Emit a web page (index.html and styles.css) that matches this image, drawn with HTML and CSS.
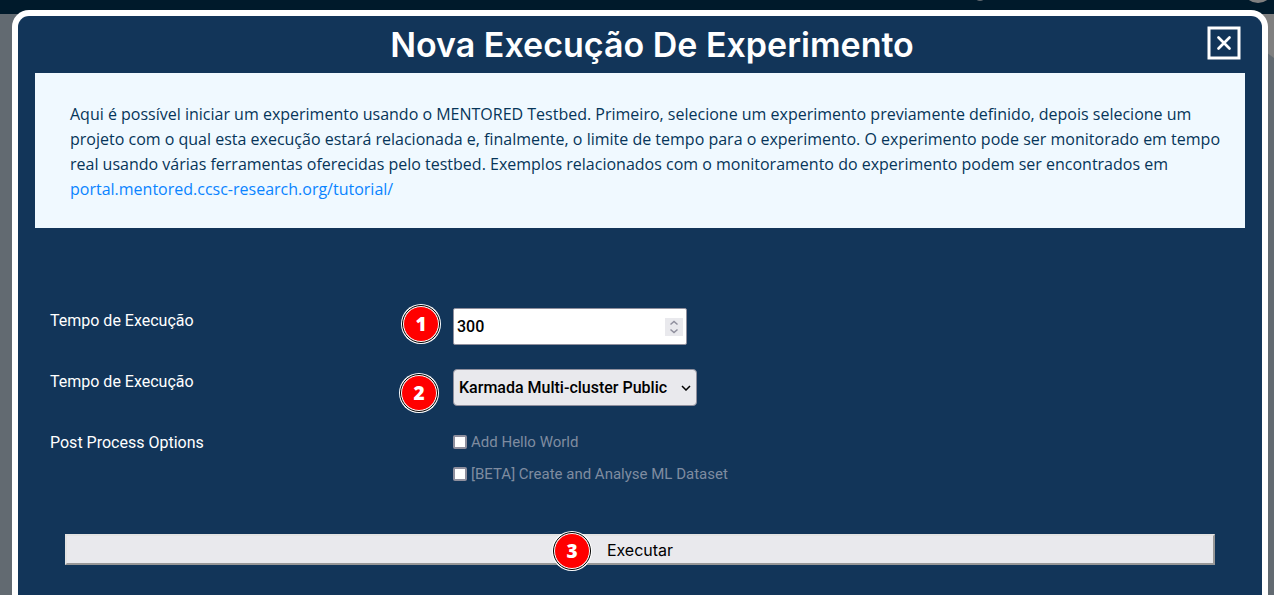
FILE: index.html
```html
<!DOCTYPE html>
<html lang="pt-BR">
<head>
<meta charset="utf-8">
<meta name="viewport" content="width=device-width, initial-scale=1">
<title>Nova Execução De Experimento</title>
<link rel="stylesheet" href="styles.css">
</head>
<body>
<div class="topbar"><span class="dot dot-small"></span><span class="dot dot-large"></span></div>
<div class="glow"></div>
<main class="modal" role="dialog" aria-labelledby="title">
  <header class="modal-header">
    <h1 id="title">Nova Execução De Experimento</h1>
    <button class="close" type="button" aria-label="Fechar">
      <svg viewBox="0 0 34 34" width="34" height="34" aria-hidden="true">
        <rect x="2" y="2" width="30" height="30" fill="none" stroke="#fff" stroke-width="3"/>
        <path d="M11.500 11.500 22.500 22.500M22.500 11.500 11.500 22.500" fill="none" stroke="#fff" stroke-width="2.700" stroke-linecap="round"/>
      </svg>
    </button>
  </header>
  <section class="notice">
    <p>Aqui é possível iniciar um experimento usando o MENTORED Testbed. Primeiro, selecione um experimento previamente definido, depois selecione um projeto com o qual esta execução estará relacionada e, finalmente, o limite de tempo para o experimento. O experimento pode ser monitorado em tempo real usando várias ferramentas oferecidas pelo testbed. Exemplos relacionados com o monitoramento do experimento podem ser encontrados em <a href="#tutorial">portal.mentored.ccsc-research.org/tutorial/</a></p>
  </section>
  <form class="form">
    <div class="row">
      <label class="label" for="time">Tempo de Execução</label>
      <div class="field">
        <span class="badge badge-one">1</span>
        <div class="number">
          <input id="time" type="number" value="300">
          <svg class="spinner" viewBox="0 0 18 18" width="18" height="18" aria-hidden="true">
            <rect width="18" height="18" fill="#e9e9ed"/>
            <path d="M5.500 6.500 9 3.500 12.500 6.500M5.500 11.500 9 14.500 12.500 11.500" fill="none" stroke="#8f8f9d" stroke-width="1.500"/>
          </svg>
        </div>
      </div>
    </div>
    <div class="row">
      <label class="label" for="cluster">Tempo de Execução</label>
      <div class="field">
        <span class="badge badge-two">2</span>
        <div class="picker">
          <select id="cluster"><option>Karmada Multi-cluster Public</option></select>
          <svg class="chevron" viewBox="0 0 10 6" width="10" height="6" aria-hidden="true">
            <path d="M1 1 5 5 9 1" fill="none" stroke="#000" stroke-width="1.500"/>
          </svg>
        </div>
      </div>
    </div>
    <div class="row">
      <span class="label">Post Process Options</span>
      <div class="field options">
        <label class="option"><input type="checkbox">Add Hello World</label>
        <label class="option"><input type="checkbox">[BETA] Create and Analyse ML Dataset</label>
      </div>
    </div>
    <div class="actions">
      <button class="run" type="submit">Executar</button>
      <span class="badge badge-three">3</span>
    </div>
  </form>
</main>
</body>
</html>
```
FILE: styles.css
```css
* { box-sizing: border-box; }

body {
  display: flow-root;
  margin: 0;
  min-height: 100vh;
  background: #626a71;
  color: #fff;
  font: 16px/24px Roboto, "Open Sans", sans-serif;
}

.topbar {
  position: absolute;
  inset: 0 0 auto;
  height: 14px;
  overflow: hidden;
  background: #001a2b;
}

.dot {
  position: absolute;
  border-radius: 50%;
}

.dot-small { top: -11px; right: 288px; width: 12px; height: 12px; background: #626a71; }
.dot-large { top: -26px; right: 1px; width: 30px; height: 29px; background: #808080; }

.glow {
  position: absolute;
  top: 14px;
  right: 0;
  width: 24px;
  height: 44px;
  background: #808080;
  clip-path: polygon(0 0, 100% 0, 100% 100%, 0 60%);
}

.modal {
  position: relative;
  min-height: calc(100vh - 10px);
  margin: 10px 6px 0 12px;
  padding: 0 17px;
  border: 6px solid #fff;
  border-bottom: 0;
  border-radius: 17px 17px 0 0;
  background: #123559;
}

.modal-header {
  display: flex;
  align-items: center;
  height: 57px;
  padding: 0 4px 3px 0;
}

.modal-header h1 {
  flex: 1;
  margin: 0;
  padding: 4px 0 0 62px;
  font: 600 34px/40px Inter, sans-serif;
  text-align: center;
}

.close {
  display: flex;
  padding: 0;
  border: 0;
  background: none;
  cursor: pointer;
}

.notice {
  padding: 29px 16px 26px 35px;
  background: #f0f9ff;
  color: #063559;
  font: 16px/25px "Open Sans", sans-serif;
}

.notice p { margin: 0; }

.notice a {
  display: inline-block;
  color: #0a84ff;
  text-decoration: none;
}

.form { padding: 80px 15px 0; }

.row {
  display: grid;
  grid-template-columns: 403px 1fr;
  align-items: start;
  min-height: 61px;
}

.label { padding-top: 1px; }

.field { position: relative; }

.number, .picker {
  position: relative;
  width: 234px;
}

.number input, .picker select {
  display: block;
  width: 100%;
  height: 37px;
  border: 1px solid #8f8f9d;
  border-radius: 2px;
  color: #000;
  font: 500 16px/24px Roboto, sans-serif;
}

.number input {
  padding: 0 24px 0 3px;
  background: #fff;
  appearance: textfield;
}

.picker { width: 244px; }

.picker select {
  padding: 0 20px 0 5px;
  border-radius: 4px;
  background: #e9e9ed;
  appearance: none;
}

.spinner, .chevron {
  position: absolute;
  top: 10px;
  right: 4px;
  pointer-events: none;
}

.chevron { top: 16px; right: 6px; }

.options {
  display: grid;
  gap: 8px;
}

.option {
  display: flex;
  align-items: center;
  gap: 4px;
  color: #7f8ca0;
  font-size: 15px;
}

.option input {
  width: 14px;
  height: 14px;
  margin: 0;
  border: 2px solid #8f8f9d;
  border-radius: 2px;
  background: #fff;
  appearance: none;
}

.actions {
  position: relative;
  margin-top: 43px;
  padding: 0 15px;
}

.run {
  display: block;
  width: 100%;
  height: 31px;
  padding: 0;
  border: 2px solid;
  border-color: #e3e3e3 #979797 #979797 #e3e3e3;
  background: #e9e9ed;
  color: #000;
  font: 16px/24px Inter, sans-serif;
}

.badge {
  position: absolute;
  width: 36px;
  height: 36px;
  border: 1px solid #fff;
  border-radius: 50%;
  outline: 1px solid #000;
  box-shadow: 0 0 0 2px #fff;
  background: #f00;
  font: 800 19px/34px "Open Sans", sans-serif;
  text-align: center;
}

.badge-one { top: -2px; left: -50px; }
.badge-two { top: 6px; left: -52px; }
.badge-three { top: -1px; left: calc(50% - 86px); }
```
